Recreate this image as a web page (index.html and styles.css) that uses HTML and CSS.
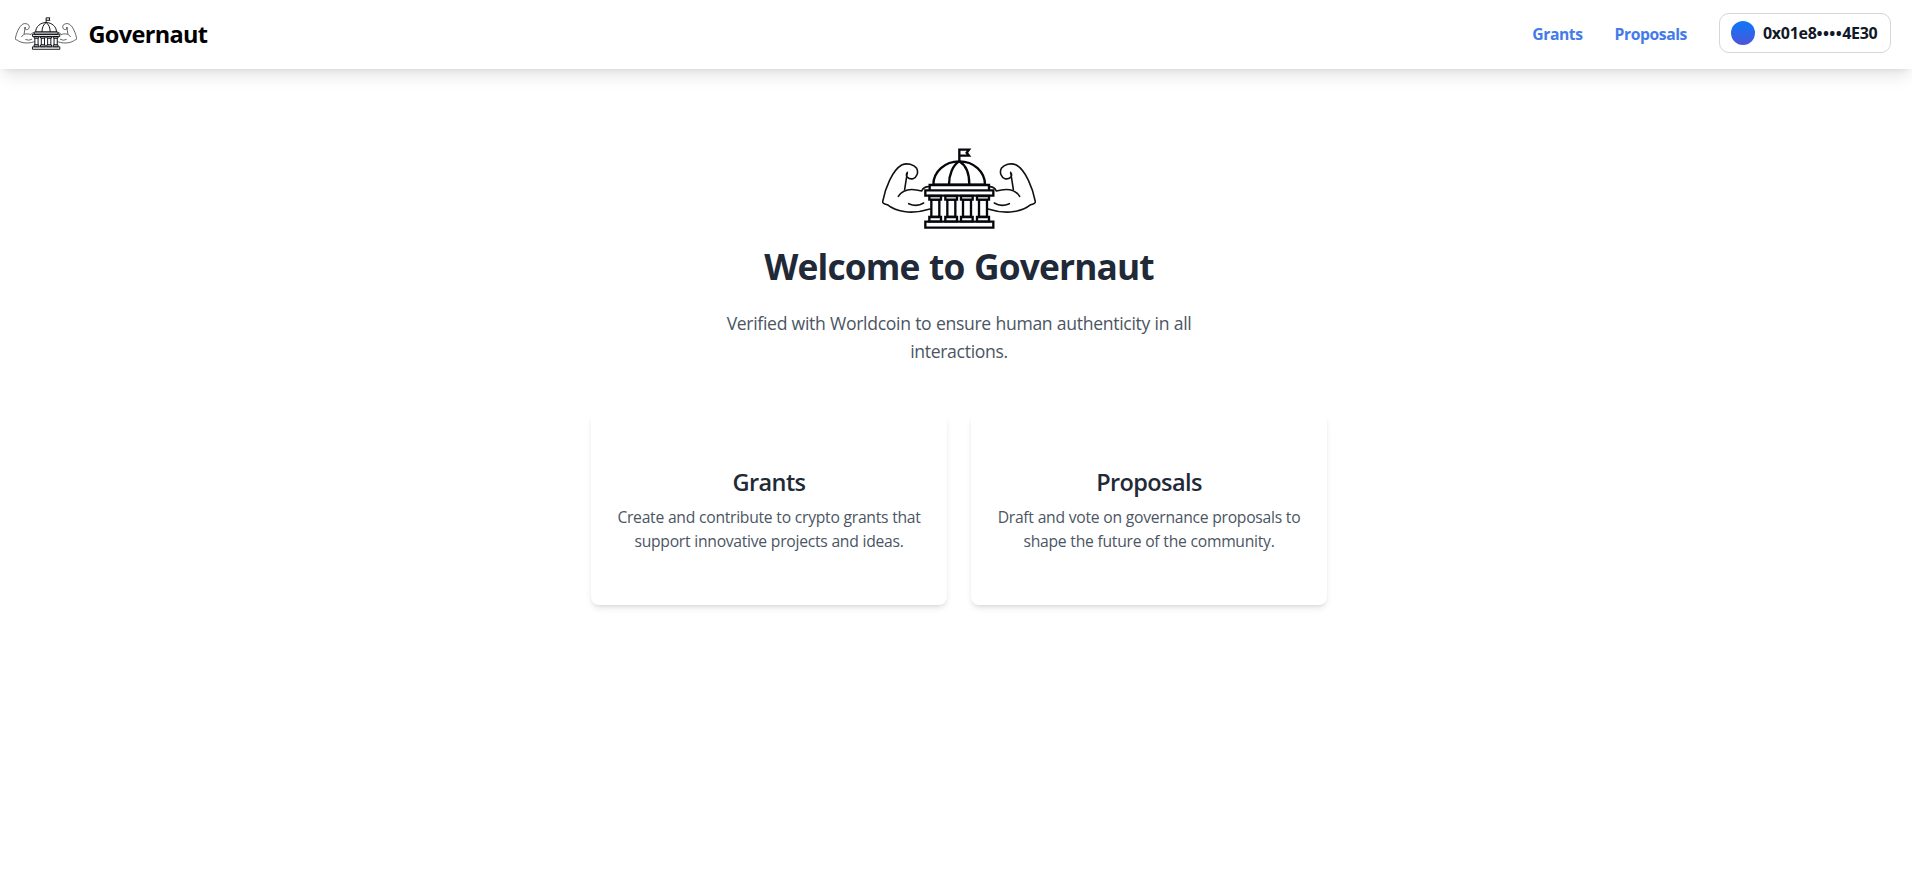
FILE: index.html
```
<!DOCTYPE html>
<html lang="en">
<head>
<meta charset="utf-8">
<title>Governaut</title>
<link rel="stylesheet" href="styles.css">
</head>
<body>
<svg class="symbols" aria-hidden="true">
  <symbol id="logo" viewBox="36 25 462 243">
    <g id="arm" class="arm">
      <path d="M104 149L112 98C104 110 116 120 129 117C141 113 146 98 140 86C132 75 112 68 95 76C67 92 46 144 38 186C38 191 43 193 52 195C75 214 120 227 180 208"/>
      <path d="M85 170C100 146 127 146 155 154C159 144 167 140 180 141"/>
      <path d="M116 192Q140 203 161 190"/>
    </g>
    <use href="#arm" transform="translate(534 0) scale(-1 1)"/>
    <g class="hall">
      <path d="M268 65V30H297L290 39L297 48H268"/>
      <path class="fill" d="M190 135C190 96 225 65 268 65S345 96 345 135Z"/>
      <path d="M237 135C237 105 248 77 268 65C288 77 298 105 298 135"/>
      <path class="fill" d="M179 136H357V152H179ZM166 152H370V168H166ZM166 246H370V264H166Z"/>
      <path class="fill" d="M184 180H208V232H184ZM232 180H256V232H232ZM279 180H303V232H279ZM327 180H351V232H327Z"/>
      <path class="fill" d="M178 169H213V180H178ZM226 169H261V180H226ZM273 169H308V180H273ZM321 169H357V180H321ZM178 232H213V245H178ZM226 232H261V245H226ZM273 232H308V245H273ZM321 232H357V245H321Z"/>
    </g>
  </symbol>
</svg>
<header class="header">
  <a class="brand"><svg class="brand-logo"><use href="#logo"/></svg><span>Governaut</span></a>
  <nav class="nav">
    <a class="nav-link">Grants</a>
    <a class="nav-link">Proposals</a>
    <button class="wallet"><span class="avatar"></span><span>0x01e8<span class="dots">••••</span>4E30</span></button>
  </nav>
</header>
<main class="hero">
  <svg class="hero-logo"><use href="#logo"/></svg>
  <h1 class="title">Welcome to Governaut</h1>
  <p class="subtitle">Verified with Worldcoin to ensure human authenticity in all interactions.</p>
  <div class="cards">
    <section class="card">
      <h2 class="card-title">Grants</h2>
      <p class="card-text">Create and contribute to crypto grants that support innovative projects and ideas.</p>
    </section>
    <section class="card">
      <h2 class="card-title">Proposals</h2>
      <p class="card-text">Draft and vote on governance proposals to shape the future of the community.</p>
    </section>
  </div>
</main>
</body>
</html>
```
FILE: styles.css
```
* { box-sizing: border-box; margin: 0; }
body {
  min-height: 100vh;
  background: #fff;
  font-family: "Segoe UI", "Open Sans", "Noto Sans", sans-serif;
  color: #000;
}
.symbols { position: absolute; width: 0; height: 0; }
.arm { fill: none; stroke: #111; stroke-width: 4.8; stroke-linecap: round; stroke-linejoin: round; }
.hall { fill: none; stroke: #05070c; stroke-width: 7; }
.fill { fill: #fff; }

.header {
  display: flex;
  align-items: center;
  justify-content: space-between;
  height: 69px;
  padding: 13px 21px 16px 15px;
  background: #fff;
  box-shadow: 0 10px 15px -3px rgba(0, 0, 0, .1), 0 4px 6px -4px rgba(0, 0, 0, .1);
}
.brand {
  display: flex;
  align-items: center;
  gap: 11.5px;
  font-size: 23.5px;
  font-weight: 700;
  line-height: 32px;
  letter-spacing: -.65px;
}
.brand span { padding-top: 2px; }
.brand-logo { width: 62px; height: 33px; }
.nav { display: flex; align-items: center; gap: 32px; }
.nav-link {
  padding-top: 1px;
  color: #447bea;
  font-size: 15.7px;
  font-weight: 700;
  line-height: 24px;
  letter-spacing: -.42px;
}
.wallet {
  display: flex;
  align-items: center;
  gap: 8px;
  width: 172px;
  height: 40px;
  padding: 0 11px;
  border: 1px solid #d6d6d8;
  border-radius: 10px;
  background: #fff;
  color: #111827;
  font: 700 16px/24px "Open Sans", "Noto Sans", sans-serif;
  letter-spacing: -.3px;
  white-space: nowrap;
}
.dots { letter-spacing: .4px; }
.avatar {
  flex: none;
  width: 24px;
  height: 24px;
  border-radius: 50%;
  background: linear-gradient(#0c78fa, #4c55d8);
}

.hero {
  display: flex;
  flex-direction: column;
  align-items: center;
  padding: 79px 0 0 6px;
  text-align: center;
}
.hero-logo { width: 154px; height: 81px; }
.title {
  margin-top: 16px;
  padding-top: 1px;
  height: 40px;
  color: #1f2937;
  font-size: 35.3px;
  font-weight: 700;
  line-height: 40px;
  letter-spacing: -.85px;
  word-spacing: 1.2px;
}
.subtitle {
  width: 512px;
  margin-top: 24px;
  color: #4b5563;
  font-size: 17.6px;
  line-height: 28px;
  letter-spacing: -.32px;
  word-spacing: .3px;
}
.cards { display: flex; gap: 24px; margin-top: 48px; }
.card {
  display: flex;
  flex-direction: column;
  justify-content: center;
  gap: 8px;
  width: 356px;
  height: 192px;
  padding: 0 24px;
  border-radius: 8px;
  background: #fff;
  box-shadow: 0 4px 6px -1px rgba(0, 0, 0, .1), 0 2px 4px -2px rgba(0, 0, 0, .1);
}
.card-title {
  height: 32px;
  padding-top: 1px;
  color: #1f2937;
  font-size: 23.5px;
  font-weight: 600;
  line-height: 32px;
  letter-spacing: -.6px;
}
.card-text {
  color: #4b5563;
  font-size: 15.7px;
  line-height: 24px;
  letter-spacing: -.28px;
  word-spacing: .2px;
}
```
